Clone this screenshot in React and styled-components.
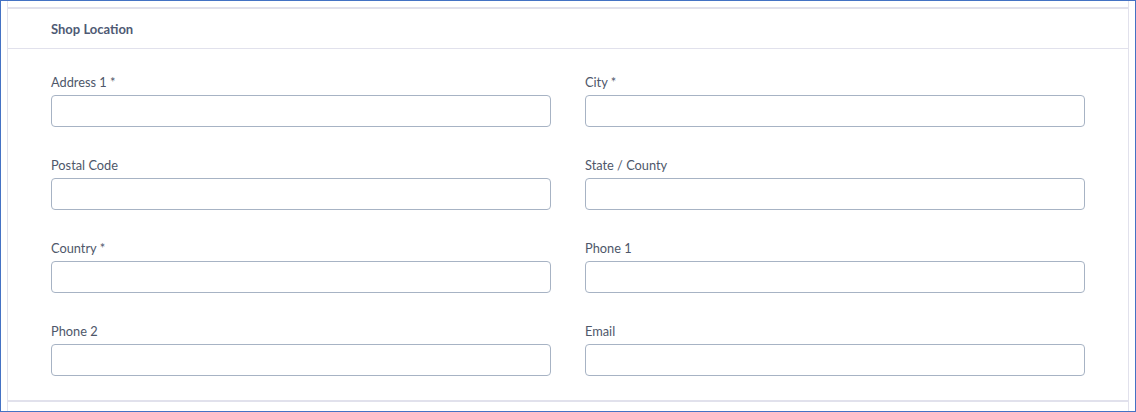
import React from 'react'
import styled, { createGlobalStyle } from 'styled-components'

const GlobalStyle = createGlobalStyle`
html, body {
margin:0;
padding:0;
background:#fff;
}
* {
box-sizing:border-box;
}
`

const Frame = styled.div`
width:1136px;
height:412px;
border:1px solid #4472c4;
padding:0 6px;
background:#fff;
font-family:Lato, "Liberation Sans", sans-serif;
`

const Container = styled.div`
height:100%;
border-left:1px solid #e1e1ec;
border-right:1px solid #e1e1ec;
padding-top:6px;
`

const Section = styled.section`
border-top:2px solid #e1e1ec;
border-bottom:2px solid #e1e1ec;
`

const Header = styled.div`
height:40px;
display:flex;
align-items:center;
padding:0 43px;
border-bottom:1px solid #e1e1ec;
font-size:13px;
font-weight:700;
color:#4f5a74;
`

const Body = styled.div`
padding:24px 43px;
display:grid;
grid-template-columns:1fr 1fr;
column-gap:34px;
row-gap:29px;
`

const Field = styled.div`
display:flex;
flex-direction:column;
`

const Label = styled.label`
font-size:12.8px;
line-height:16px;
padding-top:1px;
color:#4e576a;
margin-bottom:5px;
`

const Input = styled.input`
height:32px;
width:100%;
border:1px solid #a7b3c4;
border-radius:4px;
padding:0 10px;
outline:none;
font-family:inherit;
`

const fields = [
    'Address 1 *',
    'City *',
    'Postal Code',
    'State / County',
    'Country *',
    'Phone 1',
    'Phone 2',
    'Email',
]

export default function App() {
    return (
        <>
            <GlobalStyle />
            <Frame>
                <Container>
                    <Section>
                        <Header>Shop Location</Header>
                        <Body>
                            {fields.map(f => (
                                <Field key={f}>
                                    <Label>{f}</Label>
                                    <Input />
                                </Field>
                            ))}
                        </Body>
                    </Section>
                </Container>
            </Frame>
        </>
    )
}
